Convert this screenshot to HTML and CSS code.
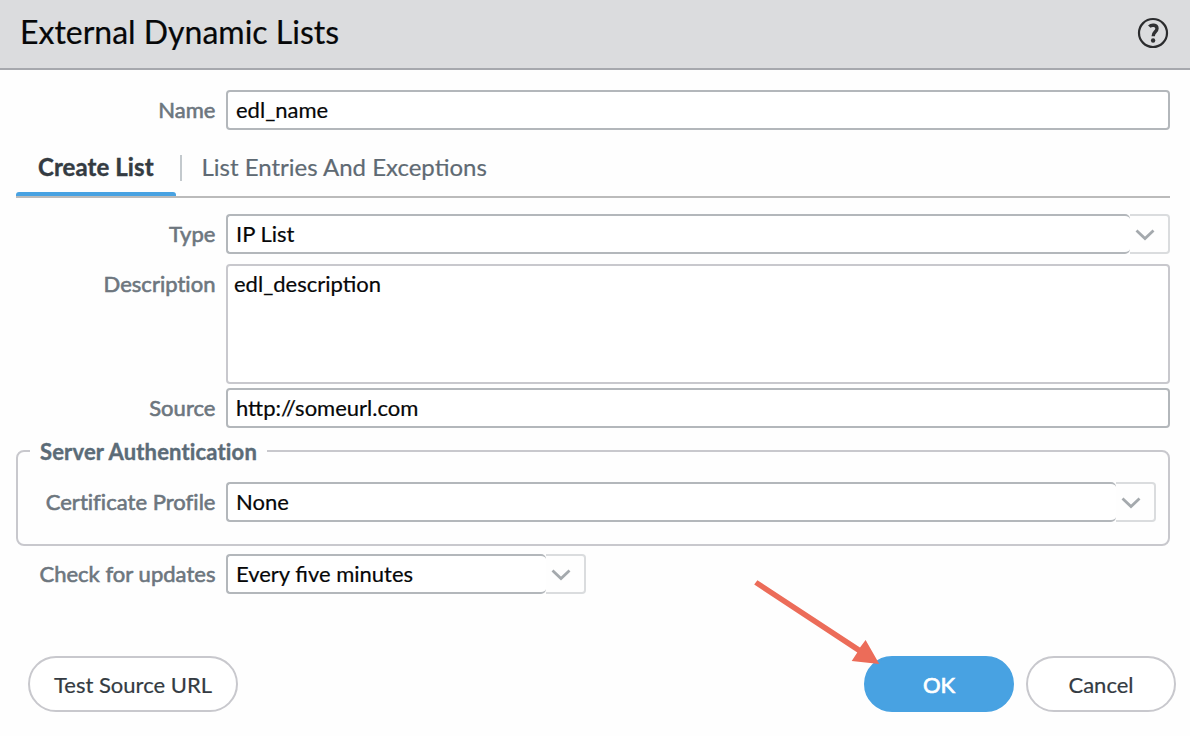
FILE: index.html
```
<!DOCTYPE html>
<html lang="en">
<head>
<meta charset="utf-8">
<title>External Dynamic Lists</title>
<link rel="stylesheet" href="styles.css">
</head>
<body>
<main class="dialog">
  <header class="header">
    <h1 class="title">External Dynamic Lists</h1>
    <svg class="help" viewBox="0 0 32 32" width="32" height="32" fill="none">
      <circle cx="16" cy="16" r="14" stroke="#2b2c2e" stroke-width="2.2"/>
      <path d="M12.3 9.7C14.2 7.6 20 7.4 20 11.5C20 14.8 16.2 14.9 16.2 19.2" stroke="#303133" stroke-width="3.4"/>
      <circle cx="16.1" cy="23.5" r="2.2" fill="#303133"/>
    </svg>
  </header>
  <section class="body">
    <div class="row">
      <span class="label">Name</span>
      <div class="field">edl_name</div>
    </div>
    <nav class="tabs">
      <div class="tab active">Create List</div>
      <div class="divider"></div>
      <div class="tab">List Entries And Exceptions</div>
    </nav>
    <div class="row type-row">
      <span class="label">Type</span>
      <div class="combo">
        <div class="field">IP List</div>
        <div class="trigger"><svg width="20" height="12" viewBox="0 0 20 12"><path d="M1.5 1.5L10 9.5L18.5 1.5"/></svg></div>
      </div>
    </div>
    <div class="row description-row">
      <span class="label">Description</span>
      <div class="field area">edl_description</div>
    </div>
    <div class="row source-row">
      <span class="label">Source</span>
      <div class="field">http://someurl.com</div>
    </div>
    <fieldset class="group">
      <legend class="legend">Server Authentication</legend>
      <div class="row">
        <span class="label">Certificate Profile</span>
        <div class="combo">
          <div class="field">None</div>
          <div class="trigger"><svg width="20" height="12" viewBox="0 0 20 12"><path d="M1.5 1.5L10 9.5L18.5 1.5"/></svg></div>
        </div>
      </div>
    </fieldset>
    <div class="row updates-row">
      <span class="label">Check for updates</span>
      <div class="combo short">
        <div class="field">Every five minutes</div>
        <div class="trigger"><svg width="20" height="12" viewBox="0 0 20 12"><path d="M1.5 1.5L10 9.5L18.5 1.5"/></svg></div>
      </div>
    </div>
  </section>
  <footer class="footer">
    <button class="button test">Test Source URL</button>
    <button class="button primary">OK</button>
    <button class="button">Cancel</button>
  </footer>
  <svg class="arrow" width="132" height="92" viewBox="0 0 132 92">
    <path d="M4.2 9.5L7.4 5.2L110 72.6L115.6 65L129.3 88.9L101.7 86L107.3 77.4Z" fill="#ec6c59"/>
  </svg>
</main>
</body>
</html>
```
FILE: styles.css
```
* { box-sizing: border-box; }
body {
  margin: 0;
  background: #fefefe;
  font: 22px/26px Lato, "Liberation Sans", sans-serif;
  color: #060708;
  -webkit-text-stroke: 0.2px currentColor;
}
.dialog { position: relative; width: 1190px; height: 736px; overflow: hidden; }
.header {
  display: flex;
  justify-content: space-between;
  align-items: center;
  height: 70px;
  padding: 0 21px 2px 20px;
  background: #dbdcde;
  border-bottom: 2px solid #a6a8ad;
}
.title { margin: 0; padding-bottom: 2px; font-size: 32px; font-weight: 400; line-height: 38px; }
.help { display: block; }
.body { padding: 20px 20px 0 16px; }
.row { display: flex; gap: 10px; }
.label {
  width: 200px;
  padding: 7px 0.5px 0 0;
  text-align: right;
  white-space: nowrap;
  color: #6d767e;
  letter-spacing: 0.03px;
  -webkit-text-stroke-width: 0.6px;
}
.field {
  flex: 1;
  height: 40px;
  padding: 5px 8px;
  border: 2px solid #b3b7bb;
  border-radius: 4px;
  background: #fff;
}
.tabs {
  display: flex;
  height: 60px;
  margin-top: 8px;
  border-bottom: 2px solid #bbb;
  font-size: 24px;
  line-height: 30px;
}
.tab { padding: 14px 20px 0 19.5px; color: #5f6a73; }
.tab.active {
  position: relative;
  width: 160px;
  padding-left: 22px;
  color: #343b42;
  font-weight: 700;
  letter-spacing: 0.08px;
  -webkit-text-stroke-width: 0.4px;
}
.tab.active::after {
  content: "";
  position: absolute;
  left: 0;
  bottom: 0;
  width: 160px;
  height: 4px;
  border-radius: 3px 3px 0 0;
  background: #48a2e2;
}
.divider { width: 2px; height: 26px; margin: 17px 0 0 4px; background: #c3c9cd; }
.type-row { margin-top: 16px; }
.combo { display: flex; flex: 1; }
.combo .field { border-right: 0; border-radius: 4px 5px 5px 4px; }
.trigger {
  display: flex;
  align-items: center;
  justify-content: center;
  width: 40px;
  padding-right: 8px;
  padding-top: 2px;
  border: 2px solid #dadcde;
  border-left: 0;
  border-radius: 0 4px 4px 0;
}
.trigger path { fill: none; stroke: #a4a9ad; stroke-width: 2.8; }
.description-row { margin-top: 10px; }
.area { height: 120px; padding-left: 6px; border-color: #c8c8cd; }
.source-row { margin-top: 4px; }
.group {
  height: 109px;
  margin: 9px 0 0;
  padding: 17px 12px 0 0;
  border: 2px solid #c8c8cd;
  border-radius: 8px;
}
.legend {
  margin-left: 12px;
  padding: 2px 10px 0;
  color: #5b6b77;
  font-weight: 700;
  letter-spacing: 0.16px;
  font-variant-ligatures: common-ligatures;
  -webkit-text-stroke-width: 0.4px;
}
.group .label { width: 198px; }
.updates-row { margin-top: 8px; }
.short { flex: 0 0 360px; }
.footer { display: flex; padding: 62px 14px 0 28px; gap: 12px; }
.button {
  width: 150px;
  height: 56px;
  padding: 2px 0 0;
  border: 2px solid #c8c8cd;
  border-radius: 28px;
  background: #fff;
  color: #343b42;
  font: 22px/26px Lato, "Liberation Sans", sans-serif;
}
.test { width: 210px; margin-right: auto; }
.primary {
  background: #48a2e2;
  border-color: #48a2e2;
  color: #fff;
  -webkit-text-stroke-width: 0.7px;
}
.arrow { position: absolute; left: 750px; top: 575px; }
```
